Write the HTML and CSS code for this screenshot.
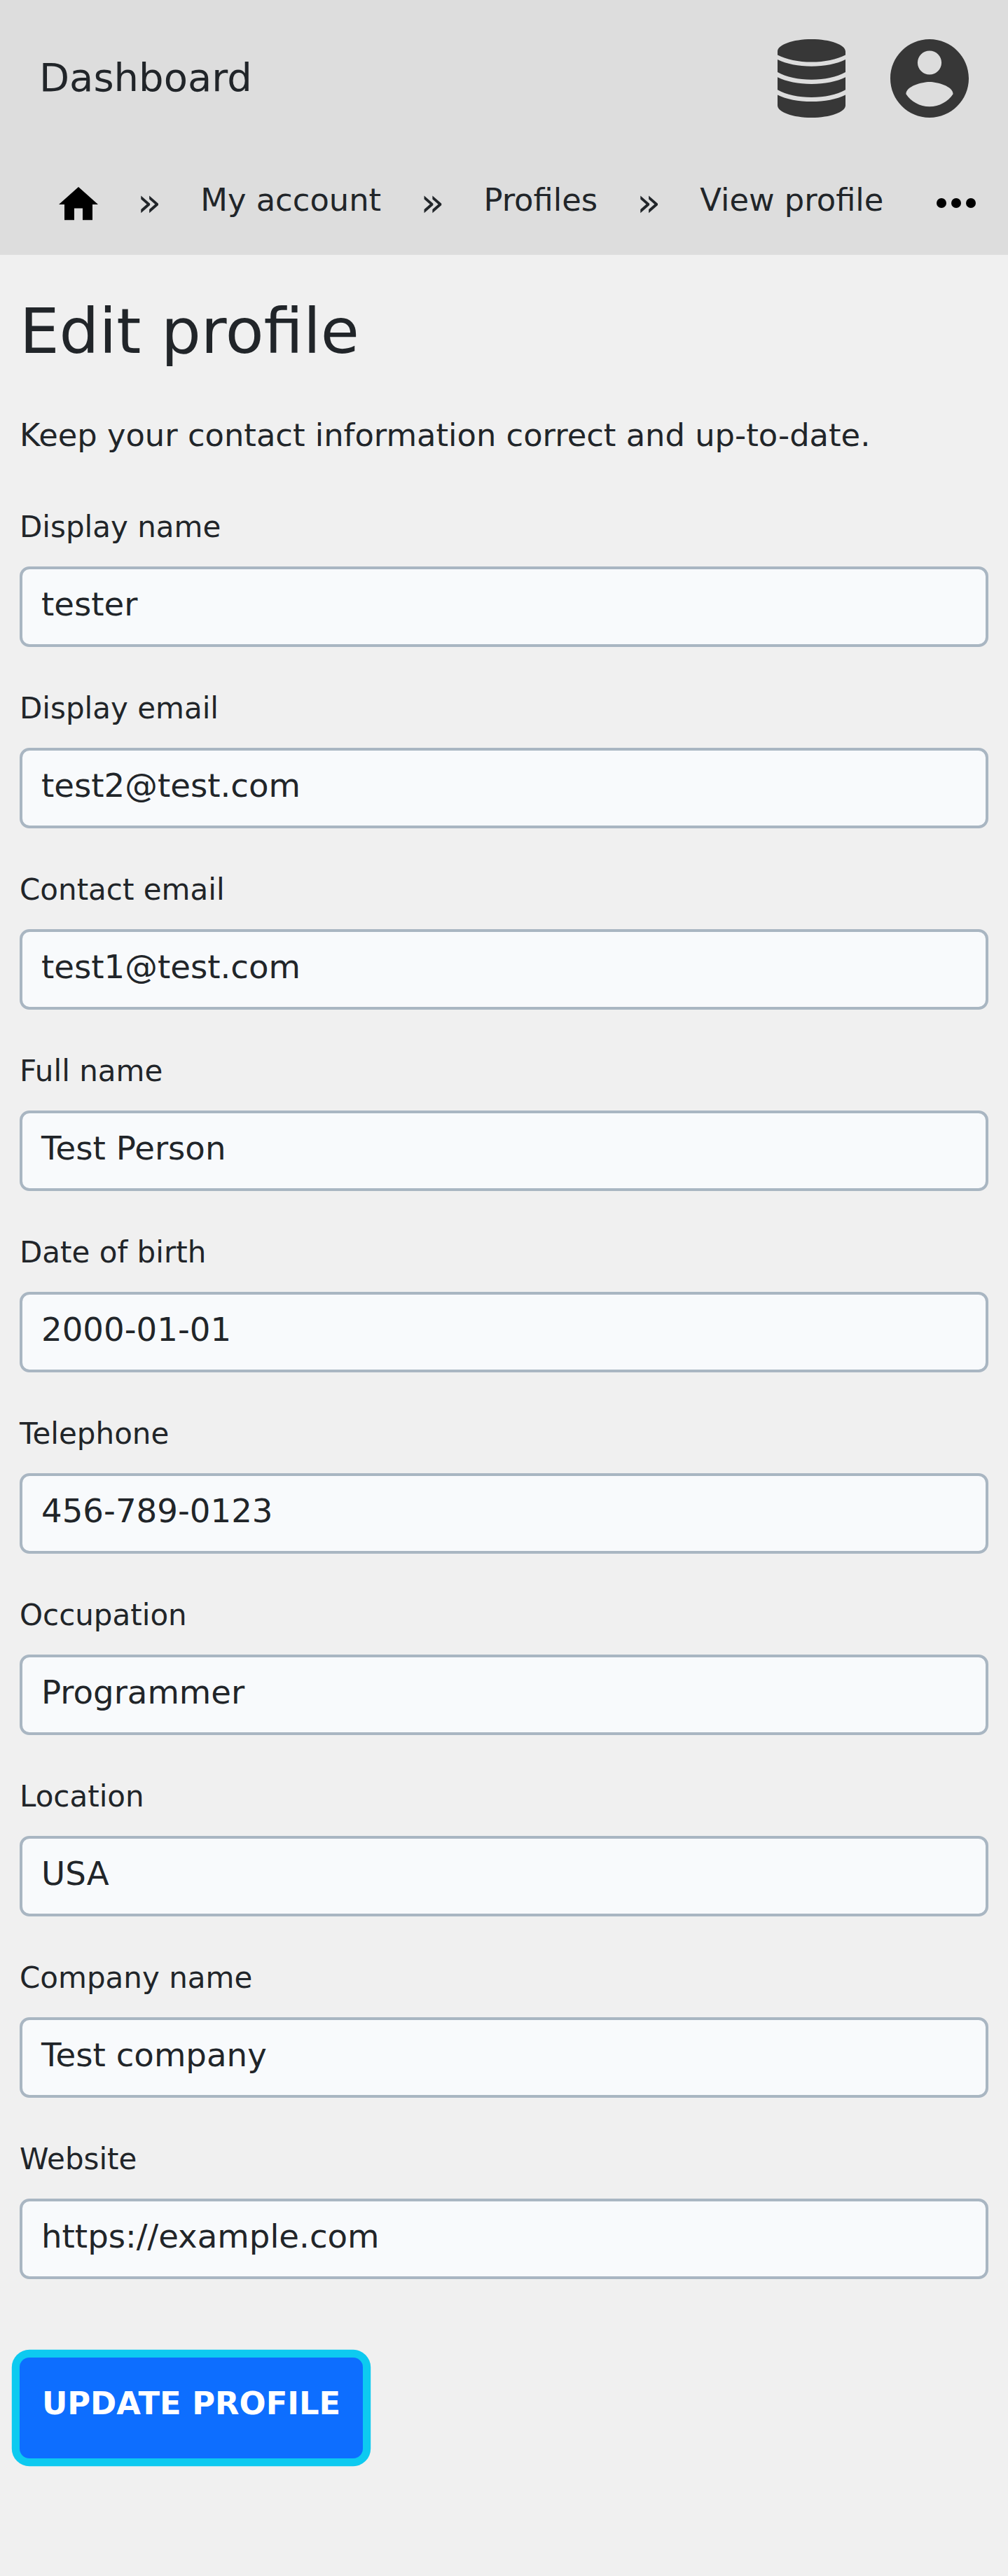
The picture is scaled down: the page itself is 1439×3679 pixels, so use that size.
FILE: index.html
```html
<!DOCTYPE html>
<html lang="en">
<head>
<meta charset="utf-8">
<title>Edit profile</title>
<link rel="stylesheet" href="styles.css">
</head>
<body>
<header class="header">
  <div class="topbar">
    <span class="brand">Dashboard</span>
    <div class="actions">
      <svg class="icon-db" viewBox="0 0 448 512" preserveAspectRatio="none"><path d="M0 80C0 36 100 0 224 0s224 36 224 80v23C390 133 310 149 224 149S58 133 0 103zM0 133c58 29 138 44 224 44s166-15 224-44v82c-58 33-138 49-224 49S58 248 0 215zM0 248c58 29 138 44 224 44s166-15 224-44v82c-58 33-138 49-224 49S58 363 0 330zM0 363c58 29 138 44 224 44s166-15 224-44v69c0 44-100 80-224 80S0 476 0 432z"/></svg>
      <svg class="icon-user" viewBox="2 2 20 20"><path d="M12 2C6.480 2 2 6.480 2 12s4.480 10 10 10 10-4.480 10-10S17.520 2 12 2zm0 2.930a3.040 3.040 0 1 1 0 6.100 3.040 3.040 0 0 1 0-6.100zm0 14.270c-2.500 0-4.710-1.280-6-3.220.030-1.990 4-3.080 6-3.080 1.990 0 5.970 1.090 6 3.080-1.290 1.940-3.500 3.220-6 3.220z"/></svg>
    </div>
  </div>
  <nav class="crumbs">
    <svg class="icon-home" viewBox="0 0 56 48"><path d="M28 0 56 25H48V47.300H34V30.500H22V47.300H8V25H0z"/></svg>
    <span class="sep">»</span>
    <span class="crumb">My account</span>
    <span class="sep">»</span>
    <span class="crumb">Profiles</span>
    <span class="sep">»</span>
    <span class="crumb">View profile</span>
    <svg class="icon-more" viewBox="0 0 56 14"><circle cx="7" cy="7" r="7"/><circle cx="28" cy="7" r="7"/><circle cx="49" cy="7" r="7"/></svg>
  </nav>
</header>
<main class="content">
  <h1 class="title">Edit profile</h1>
  <p class="intro">Keep your contact information correct and up-to-date.</p>
  <form class="form">
    <label class="field"><span class="label">Display name</span><span class="input">tester</span></label>
    <label class="field"><span class="label">Display email</span><span class="input">test2@test.com</span></label>
    <label class="field"><span class="label">Contact email</span><span class="input">test1@test.com</span></label>
    <label class="field"><span class="label">Full name</span><span class="input">Test Person</span></label>
    <label class="field"><span class="label">Date of birth</span><span class="input">2000-01-01</span></label>
    <label class="field"><span class="label">Telephone</span><span class="input">456-789-0123</span></label>
    <label class="field"><span class="label">Occupation</span><span class="input">Programmer</span></label>
    <label class="field"><span class="label">Location</span><span class="input">USA</span></label>
    <label class="field"><span class="label">Company name</span><span class="input">Test company</span></label>
    <label class="field"><span class="label">Website</span><span class="input">https://example.com</span></label>
    <button class="submit" type="button">UPDATE PROFILE</button>
  </form>
</main>
</body>
</html>
```
FILE: styles.css
```css
* { box-sizing: border-box; }
body {
  margin: 0;
  min-height: 3679px;
  background: #f0f0f0;
  color: #212529;
  font-family: "DejaVu Sans", sans-serif;
  font-size: 44.8px;
}
svg { display: block; flex: none; }
.header { height: 364px; background: #ddd; }
.topbar {
  display: flex;
  align-items: center;
  justify-content: space-between;
  height: 224px;
  padding: 0 56px;
}
.brand { padding-bottom: 3px; font-size: 56px; line-height: 84px; }
.actions { display: flex; gap: 64px; fill: #373737; }
.icon-db { width: 97px; height: 112px; }
.icon-user { width: 112px; height: 112px; }
.crumbs {
  display: flex;
  align-items: flex-start;
  gap: 56px;
  height: 140px;
  padding: 28px 46px 0 84px;
  line-height: 67px;
  white-space: nowrap;
}
.icon-home { width: 56px; height: 48px; margin-top: 15px; }
.sep { margin-top: 3px; font-size: 56px; }
.crumb { flex: none; }
.icon-more { width: 56px; height: 14px; margin: 31px 0 0 auto; }
.content { padding: 56px 28px 0; }
.title {
  margin: 0;
  font-size: 89.6px;
  font-weight: 400;
  line-height: 107px;
}
.intro { margin: 61px 0 0; line-height: 67px; }
.form { display: flex; flex-direction: column; margin-top: 66px; }
.field { display: block; height: 259px; }
.label { display: block; height: 87.5px; font-size: 42px; line-height: 63px; }
.input {
  display: block;
  height: 115.5px;
  border: 4px solid #a9b6c2;
  border-radius: 14px;
  background: #f8fafc;
  padding: 23px 27px 0;
  font-size: 46.67px;
  line-height: 54px;
}
.submit {
  align-self: flex-start;
  width: 490px;
  height: 144px;
  margin-top: 56px;
  padding: 0 0 13px;
  border: 0;
  border-radius: 14px;
  background: #0d6eff;
  box-shadow: 0 0 0 11.2px #0dcaf0;
  color: #fff;
  font: bold 44.8px "DejaVu Sans", sans-serif;
  white-space: nowrap;
}
```
